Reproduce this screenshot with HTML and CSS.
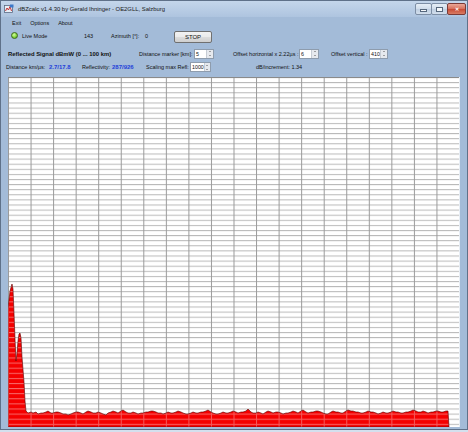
FILE: index.html
```html
<!DOCTYPE html>
<html lang="en">
<head>
    <meta charset="UTF-8">
    <title>dBZcalc</title>
    <link rel="stylesheet" href="styles.css">
</head>
<body>

    <div class="window">

        <!-- Title bar -->
        <div class="titlebar">
            <svg class="app-icon" width="10" height="10" viewBox="0 0 10 10">
                <rect x="0.5" y="1.5" width="8" height="7" fill="#e8eef6" stroke="#5a6c84" stroke-width="0.8"/>
                <path d="M1.5 7 L3 4 L4.5 6 L6 2.5 L7.5 7" fill="none" stroke="#c02020" stroke-width="0.9"/>
                <rect x="6" y="0.5" width="3.5" height="3" fill="#3c78c8"/>
            </svg>
            <div class="title">dBZcalc v1.4.30 by Gerald Ihninger - OE2GLL, Salzburg</div>
            <div class="win-buttons">
                <div class="win-btn"><span class="glyph-min"></span></div>
                <div class="win-btn"><span class="glyph-max"></span></div>
                <div class="win-btn close">&#x2715;</div>
            </div>
        </div>

        <!-- Menu -->
        <div class="menu">
            <div>Exit</div>
            <div>Options</div>
            <div>About</div>
        </div>

        <!-- Live mode row -->
        <div class="row row-live">
            <div class="led"></div>
            <div class="w-live">Live Mode</div>
            <div class="w-count">143</div>
            <div class="w-azimuth">Azimuth [°]:</div>
            <div class="w-zero">0</div>
            <button class="stop-button">STOP</button>
        </div>

        <!-- Settings row -->
        <div class="row row-settings">
            <div class="w-heading">Reflected Signal dBmW (0 ... 100 km)</div>
            <div class="w-marker">Distance marker [km]:</div>
            <div class="spin w20"><span>5</span><div class="spinner"><i class="up"></i><i class="down"></i></div></div>
            <div class="w-offh">Offset horizontal x 2.22µs :</div>
            <div class="spin w20"><span>6</span><div class="spinner"><i class="up"></i><i class="down"></i></div></div>
            <div class="w-offv">Offset vertical :</div>
            <div class="spin w19"><span>410</span><div class="spinner"><i class="up"></i><i class="down"></i></div></div>
        </div>

        <!-- Values row -->
        <div class="row row-values">
            <div class="w-dist">Distance km/µs:</div>
            <div class="value w-distval">2.7/17.8</div>
            <div class="w-refl">Reflectivity:</div>
            <div class="value w-reflval">287/926</div>
            <div class="w-scaling">Scaling max Refl:</div>
            <div class="spin w21"><span>1000</span><div class="spinner"><i class="up"></i><i class="down"></i></div></div>
            <div class="w-increment">dB/increment: 1.34</div>
        </div>

        <!-- Signal plot -->
        <div class="plot">
            <svg width="451" height="350" viewBox="0 0 451 350">
                <defs>
                    <pattern id="grid" patternUnits="userSpaceOnUse" width="22.55" height="5.1">
                        <rect width="22.55" height="5.1" fill="#ffffff"/>
                        <line x1="0" y1="0.5" x2="22.55" y2="0.5" stroke="#b8b8b8" stroke-width="1"/>
                        <line x1="0.5" y1="0" x2="0.5" y2="5.1" stroke="#9a9a9a" stroke-width="1"/>
                    </pattern>
                    <pattern id="grid-red" patternUnits="userSpaceOnUse" width="22.55" height="5.1">
                        <rect width="22.55" height="5.1" fill="#f40000"/>
                        <line x1="0" y1="0.5" x2="22.55" y2="0.5" stroke="#f86a6a" stroke-width="1"/>
                        <line x1="0.5" y1="0" x2="0.5" y2="5.1" stroke="#f45a5a" stroke-width="1"/>
                    </pattern>
                </defs>
                <rect width="451" height="350" fill="url(#grid)"/>
                <line x1="0" y1="0.5" x2="451" y2="0.5" stroke="#8a8a8a"/>
                <polygon fill="url(#grid-red)" stroke="#5a0000" stroke-width="0.6"
                    points="0,350 0,231 2,214 4,207 5,212 6,236 7,262 8,284 9,276 10,264 11,257 12,256 13,261 14,280 16,305 17,324 18,334
                    20,336 23,335 25,336 28,335 30,337 33,336 35,336 38,335 40,334 43,336 45,336 48,335 50,335 53,336 55,337 58,337 60,338 63,337 65,336
                    68,335 70,335 73,336 75,337 78,335 80,334 83,335 85,336 88,336 90,335 93,336 95,337 98,338 100,336 103,335 105,334 108,335 110,336
                    113,334 115,333 118,335 120,336 123,336 125,335 128,336 130,337 133,336 135,336 138,335 140,335 143,334 145,334 148,335 150,336
                    153,336 155,337 158,336 160,335 163,336 165,336 168,335 170,334 173,335 175,336 178,337 180,337 183,336 185,335 188,336 190,336
                    193,335 195,335 198,334 200,333 203,335 205,336 208,337 210,337 213,336 215,335 218,336 220,336 223,335 225,334 228,335 230,336
                    233,335 235,335 238,334 240,332 243,335 245,336 248,336 250,335 253,336 255,337 258,335 260,334 263,335 265,336 268,335 270,335
                    273,336 275,337 278,336 280,336 283,335 285,334 288,335 290,336 293,334 295,333 298,335 300,336 303,335 305,335 308,334 310,334
                    313,335 315,336 318,337 320,337 323,335 325,334 328,335 330,335 333,336 335,336 338,334 340,333 343,334 345,334 348,335 350,335
                    353,336 355,336 358,335 360,334 363,335 365,335 368,336 370,337 373,336 375,335 378,336 380,336 383,335 385,334 388,335 390,335
                    393,336 395,336 398,335 400,335 403,334 405,333 408,334 410,335 413,335 415,334 418,335 420,336 423,335 425,335 428,334 430,334
                    433,335 435,335 438,334 440,334 441,350"/>
            </svg>
        </div>

    </div>

</body>
</html>
```

FILE: styles.css
```css
body {
    margin: 0;
    padding: 0;
    background-color: #d4e0ee;
    font-family: "Liberation Sans", Arial, sans-serif;
    font-size: 5.5px;
    color: #111;
}

.window {
    width: 466px;
    height: 428px;
    border: 1px solid #5f7189;
    background-color: #a3bbd8;
    overflow: hidden;
}

/* Title bar */
.titlebar {
    height: 16px;
    display: flex;
    align-items: center;
    padding-left: 3px;
    background: linear-gradient(#c4d6eb, #aec4df);
}

.app-icon {
    margin-right: 4px;
}

.title {
    font-size: 5.9px;
    color: #1a1a1a;
    flex: 1;
}

.win-buttons {
    display: flex;
    align-self: flex-start;
    margin-top: 2px;
    margin-right: 1px;
}

.win-btn {
    width: 15px;
    height: 10px;
    border: 1px solid #7d8ea5;
    border-radius: 2px;
    margin-left: -1px;
    background: linear-gradient(#e6eef7, #cfdcea 50%, #bfcfe2 51%, #d2deec);
    display: flex;
    justify-content: center;
    align-items: center;
}

.win-btn.close {
    width: 17px;
    border-color: #7b3a36;
    background: linear-gradient(#eba898, #d66e5a 50%, #c84a34 51%, #d87c64);
    color: #fff;
    font-size: 5px;
    font-weight: bold;
}

.glyph-min {
    width: 5px;
    height: 1px;
    margin-top: 3px;
    background-color: #f4f7fa;
    border: 0.5px solid #56677c;
}

.glyph-max {
    width: 5px;
    height: 3px;
    border: 1px solid #56677c;
    border-top-width: 1.5px;
    background-color: #f4f7fa;
}

/* Menu */
.menu {
    height: 9px;
    display: flex;
    align-items: center;
    padding-left: 11px;
    gap: 9px;
    margin-top: 1px;
}

/* Form rows */
.row {
    display: flex;
    align-items: center;
    white-space: nowrap;
}

.row-live {
    height: 15px;
    margin-top: 1px;
    padding-left: 10px;
}

.row-settings {
    height: 13px;
    margin-top: 4px;
    padding-left: 7px;
}

.row-values {
    height: 12px;
    margin-top: 1px;
    padding-left: 5px;
}

.led {
    width: 5px;
    height: 5px;
    border-radius: 50%;
    border: 0.5px solid #3f6a1a;
    background: radial-gradient(circle at 40% 35%, #d6ff9c, #7ed23a 60%, #4f9a1c);
    margin-right: 4px;
}

.w-live { width: 62px; }
.w-count { width: 27px; }
.w-azimuth { width: 34px; }
.w-zero { width: 29px; }

.stop-button {
    width: 38px;
    height: 12px;
    margin-top: 2px;
    padding: 0;
    font-family: "Liberation Sans", Arial, sans-serif;
    font-size: 6px;
    color: #111;
    border: 1px solid #707070;
    border-radius: 2px;
    background: linear-gradient(#f2f2f2, #ebebeb 50%, #dddddd 51%, #cfcfcf);
}

.w-heading {
    width: 131px;
    font-weight: bold;
    font-size: 5.9px;
}

.w-marker { width: 55px; }
.w-offh { width: 66px; margin-left: 19px; }
.w-offv { width: 38px; margin-left: 12px; }

.w-dist { width: 43px; }
.w-distval { width: 33px; }
.w-refl { width: 30px; }
.w-reflval { width: 34px; }
.w-scaling { width: 44px; }
.w-increment { margin-left: 45px; }

.value {
    color: #1f3fd8;
    font-weight: bold;
    font-size: 6px;
}

/* Numeric up/down boxes */
.spin {
    display: flex;
    align-items: center;
    background-color: #fff;
    border: 1px solid #8e9cad;
    box-sizing: border-box;
    height: 10px;
}

.spin span {
    flex: 1;
    padding-left: 1px;
    font-size: 5.3px;
}

.w19 { width: 19px; }
.w20 { width: 20px; }
.w21 { width: 21px; }

.spinner {
    width: 6px;
    height: 100%;
    display: flex;
    flex-direction: column;
    justify-content: space-around;
    align-items: center;
    background-color: #e6e9ee;
    border-left: 1px solid #c6ccd4;
}

.spinner i {
    width: 0;
    height: 0;
    border-left: 1.5px solid transparent;
    border-right: 1.5px solid transparent;
}

.spinner .up { border-bottom: 1.5px solid #555; }
.spinner .down { border-top: 1.5px solid #555; }

/* Plot */
.plot {
    margin-top: 4px;
    margin-left: 7px;
    width: 451px;
    height: 350px;
    border-right: 1px solid #e8eef5;
}

.plot svg {
    display: block;
}
```
